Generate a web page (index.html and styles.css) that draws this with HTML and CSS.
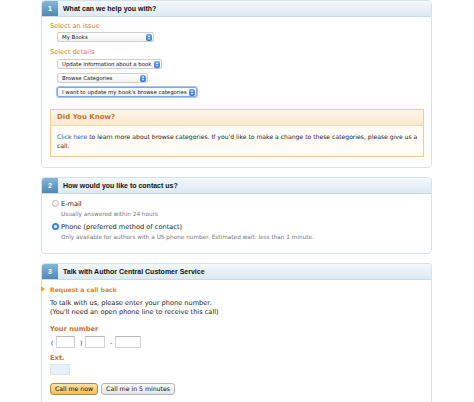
FILE: index.html
```html
<!DOCTYPE html>
<html lang="en">
<head>
    <meta charset="UTF-8">
    <title>Contact Author Central</title>
    <link rel="stylesheet" href="styles.css">
</head>
<body>
    <div class="page">

        <!-- Step 1: issue -->
        <div class="panel">
            <div class="panel-head">
                <span class="step">1</span>
                <span class="panel-title">What can we help you with?</span>
            </div>
            <div class="panel-body step-one">
                <div class="field-label">Select an issue</div>
                <div class="select sel-issue"><span>My Books</span><i class="stepper"></i></div>

                <div class="field-label details">Select details</div>
                <div class="select sel-update"><span>Update information about a book</span><i class="stepper"></i></div>
                <div class="select sel-browse"><span>Browse Categories</span><i class="stepper"></i></div>
                <div class="select sel-want focused"><span>I want to update my book's browse categories</span><i class="stepper"></i></div>

                <div class="tip-box">
                    <div class="tip-head">Did You Know?</div>
                    <p class="tip-body"><a href="#">Click here</a> to learn more about browse categories. If you'd like to make a change to these categories, please give us a call.</p>
                </div>
            </div>
        </div>

        <!-- Step 2: contact method -->
        <div class="panel">
            <div class="panel-head">
                <span class="step">2</span>
                <span class="panel-title">How would you like to contact us?</span>
            </div>
            <div class="panel-body step-two">
                <div class="option">
                    <span class="radio"></span>
                    <span class="option-name">E-mail</span>
                </div>
                <div class="option-note">Usually answered within 24 hours</div>
                <div class="option second">
                    <span class="radio checked"></span>
                    <span class="option-name">Phone (preferred method of contact)</span>
                </div>
                <div class="option-note">Only available for authors with a US phone number. Estimated wait: less than 1 minute.</div>
            </div>
        </div>

        <!-- Step 3: call back -->
        <div class="panel last">
            <div class="panel-head">
                <span class="step">3</span>
                <span class="panel-title">Talk with Author Central Customer Service</span>
            </div>
            <div class="panel-body step-three">
                <div class="callback-title">Request a call back</div>
                <p class="intro">To talk with us, please enter your phone number.<br>(You'll need an open phone line to receive this call)</p>

                <div class="form-label">Your number</div>
                <div class="phone-row">
                    <span class="punct">(</span>
                    <input type="text" class="area">
                    <span class="punct">)</span>
                    <input type="text" class="prefix">
                    <span class="punct">-</span>
                    <input type="text" class="line">
                </div>

                <div class="form-label ext">Ext.</div>
                <input type="text" class="ext-input">

                <div class="actions">
                    <button type="button" class="btn primary">Call me now</button>
                    <button type="button" class="btn">Call me in 5 minutes</button>
                </div>
            </div>
        </div>

    </div>
</body>
</html>
```

FILE: styles.css
```css
/* Page basics */
body {
    margin: 0;
    background: #fff;
    font-family: "DejaVu Sans", Verdana, sans-serif;
    color: #222;
}

.page {
    width: 391px;
    margin-left: 41px;
}

/* Step panels */
.panel {
    border: 1px solid #d7e3eb;
    border-radius: 4px;
    background: #fff;
    margin-bottom: 9px;
}

.panel.last {
    border-bottom: none;
    border-radius: 4px 4px 0 0;
}

.panel-head {
    display: flex;
    height: 15px;
    background: linear-gradient(#f3f8fb, #dce9f1);
    border-bottom: 1px solid #c9dbe7;
    border-radius: 3px 3px 0 0;
}

.step {
    width: 16px;
    background: linear-gradient(#86b6d6, #5089b5);
    color: #fff;
    font: bold 7px/15px "Liberation Sans", Arial, sans-serif;
    text-align: center;
    border-radius: 3px 0 0 0;
}

.panel-title {
    padding-left: 5px;
    font: bold 7px/15px "Liberation Sans", Arial, sans-serif;
    color: #111;
}

.panel-body {
    padding: 0 7px 0 8px;
}

/* Step 1 */
.step-one {
    padding-bottom: 10px;
}

.field-label {
    margin-top: 5px;
    font-size: 6.6px;
    line-height: 9px;
    color: #d27a32;
}

.field-label.details {
    margin-top: 6px;
}

.select {
    display: flex;
    align-items: center;
    justify-content: space-between;
    box-sizing: border-box;
    height: 10px;
    margin-left: 7px;
    padding: 0 1px 0 4px;
    border: 1px solid #cfcfcf;
    border-radius: 2px;
    background: linear-gradient(#fff, #f1f1f1);
    font-size: 5.4px;
    color: #222;
}

.sel-issue { width: 97px; margin-top: 1px; }
.sel-update { width: 105px; margin-top: 2px; }
.sel-browse { width: 91px; margin-top: 4px; }
.sel-want { width: 140px; margin-top: 4px; }

.select.focused {
    border-color: #7aa7e0;
    box-shadow: 0 0 0 1px #a9c6ef;
}

.stepper {
    width: 6px;
    height: 7px;
    border-radius: 2px;
    background: linear-gradient(#6fa8f0, #2f74dc);
    position: relative;
}

.stepper::before,
.stepper::after {
    content: "";
    position: absolute;
    left: 2px;
    width: 0;
    height: 0;
    border-left: 1px solid transparent;
    border-right: 1px solid transparent;
}

.stepper::before {
    top: 1px;
    border-bottom: 2px solid #fff;
}

.stepper::after {
    bottom: 1px;
    border-top: 2px solid #fff;
}

/* Did you know box */
.tip-box {
    margin-top: 12px;
    border: 1px solid #f1cb98;
}

.tip-head {
    height: 15px;
    padding-left: 6px;
    background: linear-gradient(#fdf6ec, #fbe7cd);
    border-bottom: 1px solid #f3d6ae;
    font-size: 7px;
    font-weight: bold;
    line-height: 15px;
    color: #c8742a;
}

.tip-body {
    margin: 0;
    padding: 6px 5px 6px 6px;
    background: #fffcf7;
    font-size: 6.1px;
    line-height: 9px;
    color: #222;
}

.tip-body a {
    color: #2b5c9a;
    text-decoration: none;
}

/* Step 2 */
.step-two {
    padding-bottom: 12px;
}

.option {
    display: flex;
    align-items: center;
    margin-top: 5px;
    height: 9px;
}

.option.second {
    margin-top: 4px;
}

.radio {
    box-sizing: border-box;
    width: 7px;
    height: 7px;
    margin-left: 2px;
    border: 1px solid #bbb;
    border-radius: 50%;
    background: linear-gradient(#fff, #eee);
}

.radio.checked {
    border: 2px solid #3a82e0;
    background: #fff;
}

.option-name {
    margin-left: 2px;
    font-size: 6.6px;
    color: #222;
}

.option-note {
    margin-top: 2px;
    padding-left: 11px;
    font-size: 5.75px;
    line-height: 8px;
    color: #777;
}

/* Step 3 */
.step-three {
    padding-bottom: 10px;
}

.callback-title {
    position: relative;
    margin-top: 5px;
    font-size: 6.1px;
    font-weight: bold;
    line-height: 9px;
    color: #e0813a;
}

/* arrow sits on the panel border */
.callback-title::before {
    content: "";
    position: absolute;
    left: -9px;
    top: 1px;
    border-top: 3.5px solid transparent;
    border-bottom: 3.5px solid transparent;
    border-left: 4px solid #f0a640;
}

.intro {
    margin: 5px 0 0;
    font-size: 6.6px;
    line-height: 9px;
    color: #222;
}

.form-label {
    margin-top: 8px;
    font-size: 6.7px;
    font-weight: bold;
    line-height: 9px;
    color: #c8742a;
}

.form-label.ext {
    margin-top: 6px;
}

.phone-row {
    display: flex;
    align-items: center;
    margin-top: 2px;
    height: 12px;
    font-size: 6px;
}

.punct {
    width: 5px;
    padding-left: 1px;
}

.phone-row input,
.ext-input {
    box-sizing: border-box;
    height: 12px;
    margin: 0 4px 0 0;
    padding: 0;
    border: 1px solid #d3d3d3;
    border-top-color: #b9b9b9;
    background: #fff;
}

.area { width: 19px; }
.prefix { width: 20px; }
.line { width: 26px; }

.ext-input {
    display: block;
    width: 20px;
    height: 11px;
    margin-top: 1px;
    background: #e8f0fb;
    border-color: #dde5ef;
}

.actions {
    display: flex;
    gap: 3px;
    margin-top: 8px;
}

.btn {
    height: 12px;
    padding: 0 4px;
    border: 1px solid #b3b6bb;
    border-radius: 3px;
    background: linear-gradient(#fafafa, #e4e5e8);
    font-family: "DejaVu Sans", Verdana, sans-serif;
    font-size: 6.2px;
    line-height: 10px;
    color: #111;
    white-space: nowrap;
}

.btn.primary {
    border-color: #b08d3a;
    background: linear-gradient(#f8e2a8, #efc14f);
}
```
